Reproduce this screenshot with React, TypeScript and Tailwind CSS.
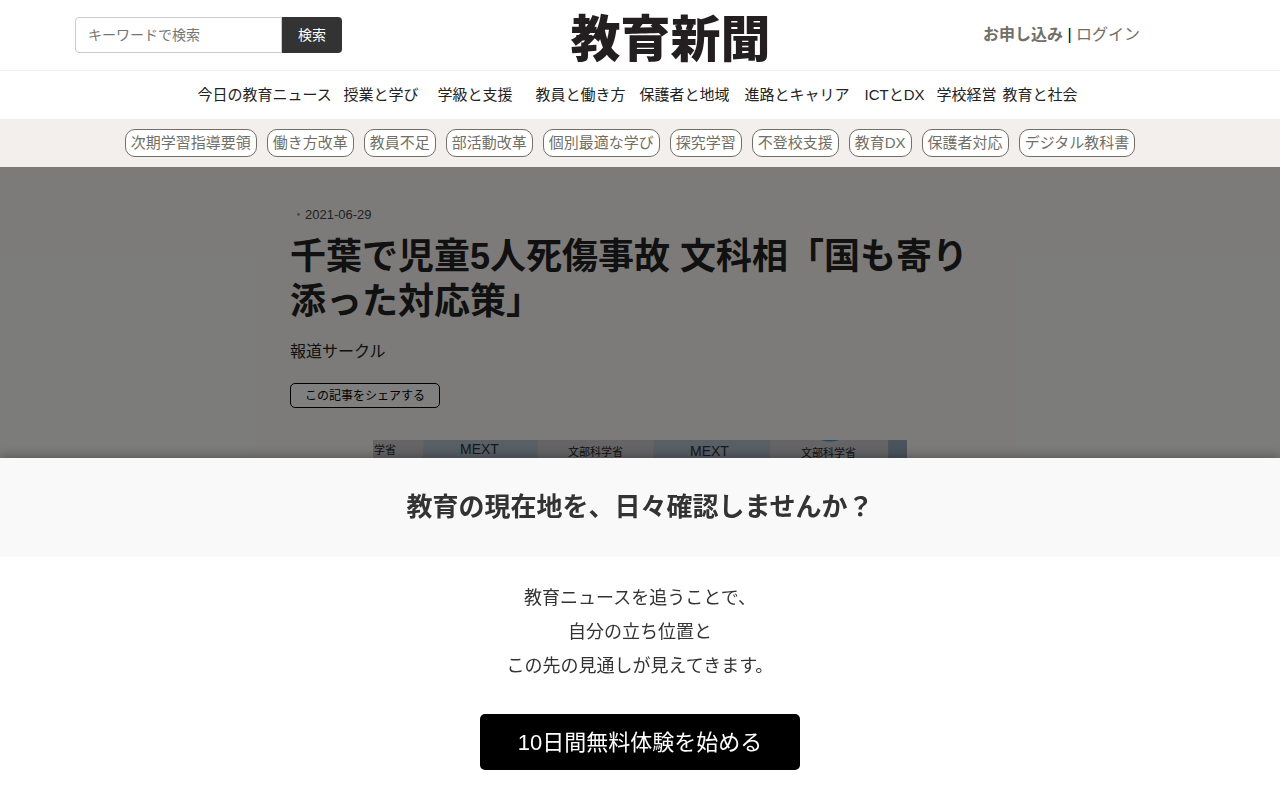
const NAV = [
  '今日の教育ニュース',
  '授業と学び',
  '学級と支援',
  '教員と働き方',
  '保護者と地域',
  '進路とキャリア',
  'ICTとDX',
  '学校経営',
  '教育と社会',
];

const TAGS = [
  '次期学習指導要領',
  '働き方改革',
  '教員不足',
  '部活動改革',
  '個別最適な学び',
  '探究学習',
  '不登校支援',
  '教育DX',
  '保護者対応',
  'デジタル教科書',
];

function SearchForm() {
  return (
    <form className="flex h-9" onSubmit={(e) => e.preventDefault()}>
      <input
        type="search"
        aria-label="キーワードで検索"
        placeholder="キーワードで検索"
        className="w-[207px] rounded-l border border-[#cccccc] bg-white px-3 text-sm text-[#333333] placeholder:text-[#757575]"
      />
      <button type="submit" className="w-[60px] rounded-r bg-[#333333] text-sm text-white">
        検索
      </button>
    </form>
  );
}

function Header() {
  return (
    <header className="border-b border-[#eeeeee] bg-white">
      <div className="flex h-[70px] items-center justify-between pr-[140px] pl-[75px]">
        <SearchForm />
        <a
          href="#top"
          className="ml-4 font-['Noto_Sans_CJK_JP',sans-serif] text-[50px] leading-[60px] font-black whitespace-nowrap text-[#231f20]"
        >
          教育新聞
        </a>
        <div className="text-right text-base whitespace-nowrap">
          <a href="#apply" className="font-bold text-[#716f66]">
            お申し込み
          </a>{' '}
          |{' '}
          <a href="#login" className="text-[#716f66]">
            ログイン
          </a>
        </div>
      </div>
    </header>
  );
}

function NewsPhoto() {
  return (
    <svg
      viewBox="0 0 534 300"
      className="mx-auto mt-8 block w-full max-w-[534px]"
      role="img"
      aria-label="文部科学省の会見"
    >
      <rect width="534" height="300" fill="#cbc8cc" />
      <path d="M51 0H165L155 300H30Z" fill="#b0bfcb" />
      <path d="M281 0H397V300H266Z" fill="#b0bfcb" />
      <path d="M515 0H534V300H520Z" fill="#97a8b9" />
      <path d="M448 0H466Q457 3 448 0Z" fill="#2f98c8" />
      <g fill="#25242b" fontSize="11">
        <text x="1" y="14">学省</text>
        <text x="195" y="16">文部科学省</text>
        <text x="428" y="17">文部科学省</text>
      </g>
      <g fill="#2c3040" fontSize="14">
        <text x="87" y="14">MEXT</text>
        <text x="317" y="16">MEXT</text>
      </g>
    </svg>
  );
}

function Article() {
  return (
    <article className="mx-auto w-[700px] max-w-full pt-10">
      <p className="text-[13px] leading-4 text-[#444444]">
        <span className="pl-[2px] text-[#999999]">・</span>
        2021-06-29
      </p>
      <h1 className="mt-[11px] text-[36px] leading-[45px] font-bold text-[#222222]">
        千葉で児童5人死傷事故 文科相「国も寄り添った対応策」
      </h1>
      <p className="mt-4 text-base text-[#222222]">報道サークル</p>
      <button
        type="button"
        className="mt-[19px] block h-[25px] w-[150px] rounded-[5px] border border-black bg-white text-xs text-black"
      >
        この記事をシェアする
      </button>
      <NewsPhoto />
    </article>
  );
}

function TrialSheet() {
  return (
    <section
      role="dialog"
      aria-labelledby="trial-title"
      className="fixed inset-x-0 bottom-0 bg-white text-center text-[#333333] shadow-[0_-2px_10px_rgba(0,0,0,0.3)]"
    >
      <h2
        id="trial-title"
        className="bg-[#f9f9f9] py-[30px] text-[26px] leading-[39px] font-bold"
      >
        教育の現在地を、日々確認しませんか？
      </h2>
      <div className="px-5 pt-6 pb-[30px]">
        <p className="text-lg leading-[34px]">
          教育ニュースを追うことで、
          <br />
          自分の立ち位置と
          <br />
          この先の見通しが見えてきます。
        </p>
        <a
          href="#trial"
          className="mx-auto mt-[31px] flex h-14 w-80 items-center justify-center rounded-[5px] bg-black text-[22px] text-white"
        >
          10日間無料体験を始める
        </a>
      </div>
    </section>
  );
}

export default function App() {
  return (
    <div
      lang="ja"
      className="flex h-screen flex-col overflow-hidden bg-white font-['Liberation_Sans','Noto_Sans_CJK_JP',sans-serif] text-black"
    >
      <Header />
      <nav aria-label="カテゴリー" className="bg-white pr-1">
        <ul className="mx-auto grid h-12 w-[881px] max-w-full grid-cols-[146fr_94fr_98fr_104fr_105fr_120fr_72fr_66fr_76fr] items-center text-[15px] whitespace-nowrap text-[#222222]">
          {NAV.map((item) => (
            <li key={item}>
              <a href="#category">{item}</a>
            </li>
          ))}
        </ul>
      </nav>
      <nav aria-label="注目のテーマ" className="bg-[#f3efec]">
        <ul className="flex h-12 items-center justify-center gap-[10px] pr-5 text-[15px] whitespace-nowrap">
          {TAGS.map((tag) => (
            <li key={tag}>
              <a
                href="#tag"
                className="flex h-7 items-center rounded-[10px] border border-[#716f66] bg-white px-[5px] text-[#716f66]"
              >
                {tag}
              </a>
            </li>
          ))}
        </ul>
      </nav>
      <main className="relative flex-1 overflow-hidden bg-[#f8f7f3]">
        <Article />
        <div className="absolute inset-0 bg-black/50" />
      </main>
      <TrialSheet />
    </div>
  );
}
